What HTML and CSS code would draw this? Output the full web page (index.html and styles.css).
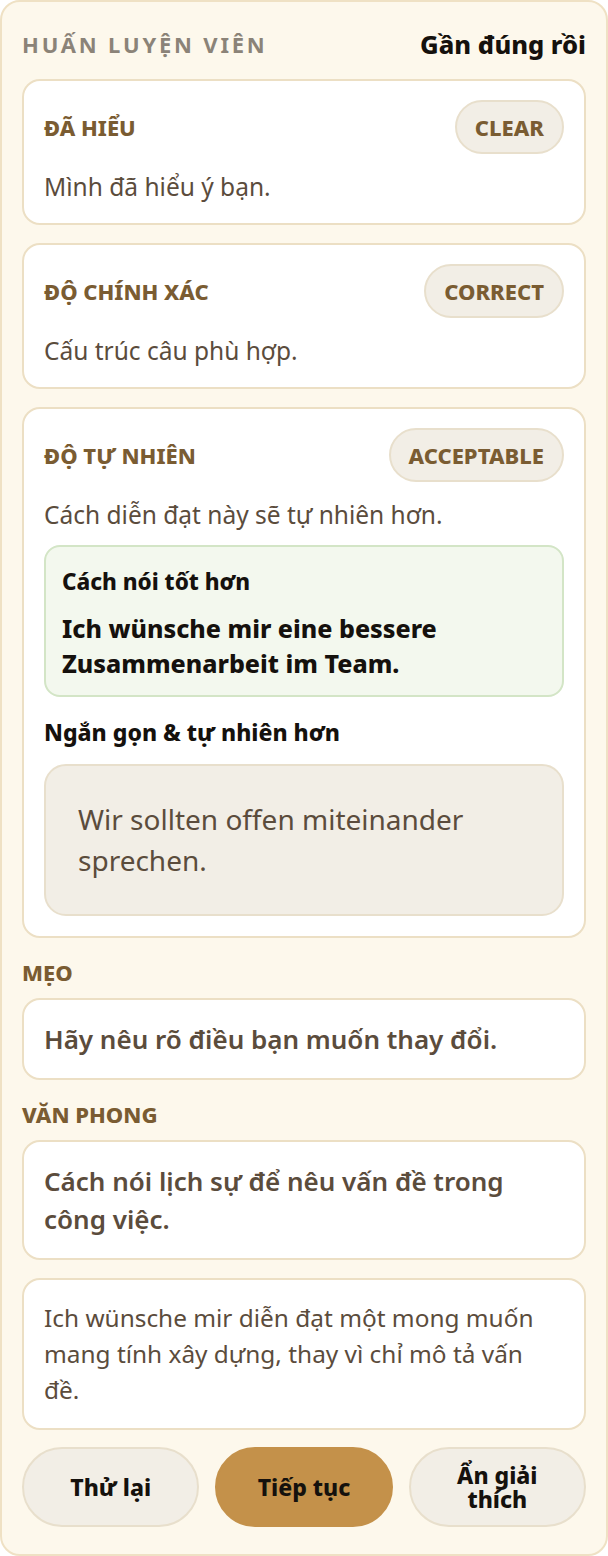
FILE: index.html
```html
<!DOCTYPE html>
<html lang="vi">

<head>
  <meta charset="UTF-8">
  <meta name="viewport" content="width=device-width, initial-scale=1.0">
  <title>Huấn luyện viên</title>

  <link rel="stylesheet" href="styles.css">
</head>

<body>
  <main class="panel">
    <div class="panel-head">
      <span class="eyebrow">HUẤN LUYỆN VIÊN</span>
      <span class="verdict">Gần đúng rồi</span>
    </div>

    <section class="card">
      <div class="card-head">
        <span class="label">ĐÃ HIỂU</span>
        <span class="badge">CLEAR</span>
      </div>
      <p class="note">Mình đã hiểu ý bạn.</p>
    </section>

    <section class="card">
      <div class="card-head">
        <span class="label">ĐỘ CHÍNH XÁC</span>
        <span class="badge">CORRECT</span>
      </div>
      <p class="note">Cấu trúc câu phù hợp.</p>
    </section>

    <section class="card">
      <div class="card-head">
        <span class="label">ĐỘ TỰ NHIÊN</span>
        <span class="badge">ACCEPTABLE</span>
      </div>
      <p class="note">Cách diễn đạt này sẽ tự nhiên hơn.</p>

      <div class="better">
        <div class="better-title">Cách nói tốt hơn</div>
        <div class="better-text">Ich wünsche mir eine bessere Zusammenarbeit im Team.</div>
      </div>

      <div class="sub-title">Ngắn gọn &amp; tự nhiên hơn</div>
      <div class="short">Wir sollten offen miteinander sprechen.</div>
    </section>

    <div class="section-label">MẸO</div>
    <section class="card card-plain">
      <p class="strong-note">Hãy nêu rõ điều bạn muốn thay đổi.</p>
    </section>

    <div class="section-label">VĂN PHONG</div>
    <section class="card card-plain">
      <p class="strong-note">Cách nói lịch sự để nêu vấn đề trong công việc.</p>
    </section>

    <section class="card card-plain">
      <p class="explain">Ich wünsche mir diễn đạt một mong muốn mang tính xây dựng, thay vì chỉ mô tả vấn đề.</p>
    </section>

    <div class="actions">
      <button class="btn">Thử lại</button>
      <button class="btn btn-primary">Tiếp tục</button>
      <button class="btn">Ẩn giải thích</button>
    </div>
  </main>
</body>

</html>
```

FILE: styles.css
```css
html,
body {
  margin: 0;
  padding: 0;
}

body {
  font-family: "Noto Sans", "Open Sans", sans-serif;
  color: #1c1712;
  background: #ffffff;
}

p {
  margin: 0;
}

.panel {
  box-sizing: border-box;
  width: 608px;
  height: 1556px;
  padding: 20px 20px 0 20px;
  background: #fdf8ec;
  border: 2px solid #efe1c4;
  border-radius: 20px;
  display: flex;
  flex-direction: column;
}

.panel-head {
  display: flex;
  justify-content: space-between;
  align-items: center;
  height: 44px;
  margin-bottom: 13px;
}

.eyebrow {
  font-size: 22px;
  font-weight: 700;
  letter-spacing: 2.8px;
  color: #8b8378;
}

.verdict {
  font-size: 25.5px;
  font-weight: 800;
  color: #15110d;
}

.card {
  background: #ffffff;
  border: 2px solid #ecdfc4;
  border-radius: 18px;
  padding: 19px 20px 20px 20px;
  margin-bottom: 18px;
}

.card-head {
  display: flex;
  justify-content: space-between;
  align-items: center;
}

.label {
  font-size: 22px;
  font-weight: 800;
  color: #7a5c32;
}

.badge {
  box-sizing: border-box;
  height: 54px;
  padding: 0 18px;
  display: flex;
  align-items: center;
  border-radius: 27px;
  background: #f2eee6;
  border: 2px solid #e8dfcc;
  font-size: 22px;
  font-weight: 800;
  color: #7a5c32;
}

.note {
  margin-top: 17px;
  font-size: 24.5px;
  line-height: 32px;
  color: #5b4c3c;
}

.better {
  margin-top: 14px;
  background: #f3f8ee;
  border: 2px solid #d3e5c6;
  border-radius: 16px;
  padding: 20px 16px 14px 16px;
}

.better-title {
  font-size: 22.5px;
  font-weight: 800;
  line-height: 30px;
  color: #15110d;
}

.better-text {
  margin-top: 14px;
  font-size: 25px;
  font-weight: 800;
  line-height: 35px;
  color: #15110d;
}

.sub-title {
  margin-top: 20px;
  font-size: 23px;
  font-weight: 800;
  line-height: 30px;
  color: #15110d;
}

.short {
  margin-top: 17px;
  background: #f2eee6;
  border: 2px solid #e8dfcc;
  border-radius: 22px;
  padding: 33px 32px 33px 32px;
  font-size: 28px;
  line-height: 41px;
  color: #5b4c3c;
}

.section-label {
  margin-top: 2px;
  margin-bottom: 12px;
  font-size: 22px;
  font-weight: 800;
  line-height: 28px;
  color: #7a5c32;
}

.card-plain {
  padding: 20px;
}

.strong-note {
  font-size: 26px;
  font-weight: 600;
  line-height: 38px;
  color: #5b4c3c;
}

.explain {
  padding-right: 24px;
  font-size: 24.4px;
  line-height: 36px;
  color: #5b4c3c;
}

.actions {
  display: grid;
  grid-template-columns: 1fr 1fr 1fr;
  gap: 16px;
  margin-top: -1px;
}

.btn {
  height: 80px;
  border-radius: 40px;
  background: #f2eee6;
  border: 2px solid #e8dfcc;
  font-family: inherit;
  font-size: 23px;
  font-weight: 800;
  line-height: 24px;
  color: #15110d;
  padding: 0 30px;
}

.btn-primary {
  background: #c4914a;
  border-color: #c4914a;
}
```
